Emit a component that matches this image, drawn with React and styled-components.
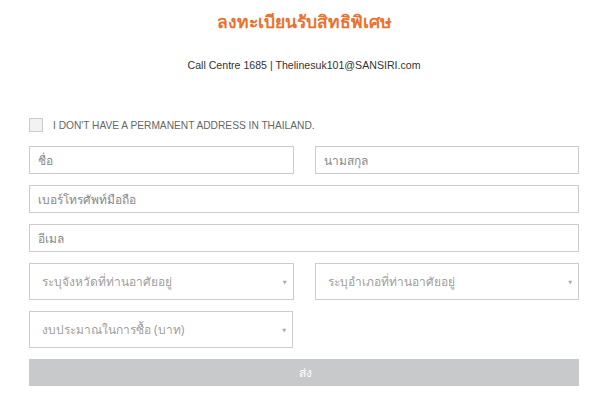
import styled, { createGlobalStyle } from "styled-components";

const GlobalStyle = createGlobalStyle`
  html, body {
    margin: 0;
    padding: 0;
    background: #fff;
  }
  body {
    font-family: "Noto Sans", "DejaVu Sans", sans-serif;
  }
`;

const Page = styled.div`
  width: 550px;
  margin-left: 29px;
  padding-top: 9px;
`;

const Title = styled.h1`
  margin: 0;
  text-align: center;
  font-size: 17.5px;
  line-height: 24px;
  font-weight: 700;
  color: #e9722f;
`;

const Contact = styled.p`
  margin: 24px 0 0;
  text-align: center;
  font-family: "Liberation Sans", Arial, sans-serif;
  font-size: 10.6px;
  line-height: 16px;
  color: #333;
`;

const Form = styled.form`
  display: flex;
  flex-direction: column;
  gap: 11px;
  margin-top: 45px;
`;

const CheckRow = styled.label`
  display: flex;
  align-items: center;
  gap: 10px;
  height: 14px;
  margin-bottom: 3px;
  font-family: "Liberation Sans", Arial, sans-serif;
  font-size: 10.2px;
  color: #666;
  text-transform: uppercase;
`;

const Box = styled.span`
  width: 12px;
  height: 12px;
  border: 1px solid #ccc;
  background: #f2f2f2;
`;

const Row = styled.div`
  display: grid;
  grid-template-columns: ${(p) => (p.$half ? "264px" : "1fr 1fr")};
  column-gap: 21px;
`;

const Field = styled.input`
  box-sizing: border-box;
  width: 100%;
  height: 28px;
  padding: 0 8px;
  border: 1px solid #ccc;
  font-family: inherit;
  font-size: 12px;
  color: #333;
  background: #fff;
  outline: none;

  &::placeholder {
    color: #8a8a8a;
  }
`;

const SelectBox = styled.div`
  box-sizing: border-box;
  display: flex;
  align-items: center;
  justify-content: space-between;
  height: 37px;
  padding: 0 6px 0 12px;
  border: 1px solid #ccc;
  font-size: 12px;
  color: #a0a0a0;
`;

const Caret = styled.span`
  font-size: 5px;
  color: #aaa;
`;

const Submit = styled.button`
  height: 27px;
  border: none;
  background: #c8c9ca;
  color: #fff;
  font-family: inherit;
  font-size: 12px;
  padding: 0;
  text-indent: 2px;
`;

const Select = ({ label }) => (
  <SelectBox>
    <span>{label}</span>
    <Caret>▼</Caret>
  </SelectBox>
);

export default function App() {
  return (
    <Page>
      <GlobalStyle />
      <Title>ลงทะเบียนรับสิทธิพิเศษ</Title>
      <Contact>Call Centre 1685 | Thelinesuk101@SANSIRI.com</Contact>
      <Form onSubmit={(e) => e.preventDefault()}>
        <CheckRow>
          <Box />
          I don't have a permanent address in Thailand.
        </CheckRow>
        <Row>
          <Field placeholder="ชื่อ" />
          <Field placeholder="นามสกุล" />
        </Row>
        <Field placeholder="เบอร์โทรศัพท์มือถือ" />
        <Field placeholder="อีเมล" />
        <Row>
          <Select label="ระบุจังหวัดที่ท่านอาศัยอยู่" />
          <Select label="ระบุอำเภอที่ท่านอาศัยอยู่" />
        </Row>
        <Row $half>
          <Select label="งบประมาณในการซื้อ (บาท)" />
        </Row>
        <Submit type="submit">ส่ง</Submit>
      </Form>
    </Page>
  );
}
